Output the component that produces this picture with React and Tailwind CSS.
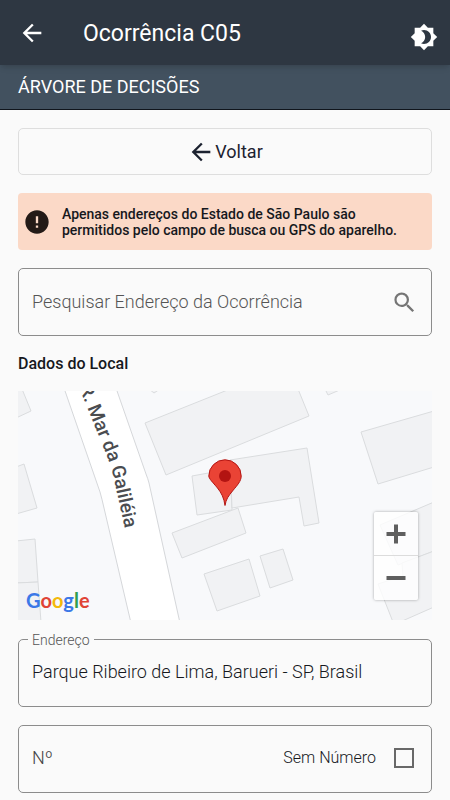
import { useState } from 'react';
import { MdArrowBack, MdBrightness4, MdError, MdSearch } from 'react-icons/md';

const buildings = [
  '-2,-2 4,-2 13,20 -2,27',
  '-2,76 6,73 19,117 -2,123',
  '-2,150 17,148 20,191 -2,192',
  '-2,192 20,191 23,231 -2,231',
  '131,-2 136,2 142,-2',
  '307,-2 310,4 324,-2',
  '127,32 212,-2 280,-2 291,25 148,84',
  '174,85 212,78 214,119 179,124',
  '212,69 289,57 301,132 286,135 281,106 214,117',
  '154,142 220,117 228,142 164,167',
  '186,183 231,168 242,205 199,220',
  '242,165 265,158 275,189 252,197',
  '343,41 416,20 416,76 360,93',
  '362,134 416,111 416,160 380,174',
  '360,193 385,185 384,172 416,160 416,216 382,231 375,231',
];

function Header() {
  return (
    <header className="relative z-10 flex h-[65px] items-center bg-[#2e3742] px-[18px] text-white shadow-md">
      <button type="button" aria-label="Voltar" className="text-[28px]">
        <MdArrowBack />
      </button>
      <h1 className="ml-[37px] flex-1 pt-0.5 text-[23px] leading-8">Ocorrência C05</h1>
      <button type="button" aria-label="Alternar tema" className="-mr-1.5 mt-2 text-[28px]">
        <MdBrightness4 />
      </button>
    </header>
  );
}

function MapView() {
  return (
    <div className="relative mt-[15px] h-[229px] overflow-hidden bg-[#f8f9fb]">
      <svg viewBox="0 0 414 229" preserveAspectRatio="xMidYMid slice" className="h-full w-full">
        <g fill="#f1f2f4" stroke="#dadcde" strokeWidth="1">
          {buildings.map((points) => (
            <polygon key={points} points={points} />
          ))}
        </g>
        <path
          d="M46 -3 L82 101 Q84 108 86 117 L113 232 H162 L131 92 Q130 88 128 83 L98 -3Z"
          fill="#fff"
          stroke="#d5d7da"
        />
        <path id="street" d="M57 -14 L84 53 Q94 76 98 97 L115 175" fill="none" />
        <text className="font-medium" fontSize="19" fill="#4a4c50">
          <textPath href="#street" startOffset="11">R. Mar da Galiléia</textPath>
        </text>
        <path
          d="M207 114.500 C206 107 203.500 102 199.500 97 C194.500 91 190.800 87.500 190.800 85 A16.200 16.200 0 1 1 223.200 85 C223.200 90 219.500 94 214.500 100 C210.500 105 208 108 207 114.500Z"
          fill="#ea4335"
          stroke="#b31412"
        />
        <circle cx="207" cy="85" r="6" fill="#b31412" />
      </svg>
      <a
        href="#mapa"
        aria-label="Google"
        className="absolute bottom-1.5 left-2 font-['Lato'] text-[20px] leading-7 font-bold"
      >
        <span className="text-[#3b78e7]">G</span>
        <span className="text-[#e04436]">o</span>
        <span className="text-[#f3b90c]">o</span>
        <span className="text-[#3b78e7]">g</span>
        <span className="text-[#2f9e50]">l</span>
        <span className="text-[#e04436]">e</span>
      </a>
      <div className="absolute right-[14px] bottom-5 flex w-11 flex-col rounded-xs bg-white/80 shadow-[0_0_3px_rgba(0,0,0,0.35)]">
        <button type="button" aria-label="Aumentar zoom" className="flex h-11 items-center justify-center border-b border-[#dcdcdc]">
          <svg viewBox="0 0 20 20" className="size-5" stroke="#5f5f5f" strokeWidth="4">
            <path d="M0.500 10h19M10 0.500v19" />
          </svg>
        </button>
        <button type="button" aria-label="Diminuir zoom" className="flex h-11 items-center justify-center">
          <svg viewBox="0 0 20 20" className="size-5" stroke="#5f5f5f" strokeWidth="4">
            <path d="M0.500 10h19" />
          </svg>
        </button>
      </div>
    </div>
  );
}

function App() {
  const [address, setAddress] = useState('Parque Ribeiro de Lima, Barueri - SP, Brasil');
  const [noNumber, setNoNumber] = useState(false);

  return (
    <div className="min-h-screen bg-[#fafafa] pb-2 font-['Roboto',sans-serif] text-[#16181d]">
      <Header />
      <h2 className="h-[45px] border-b border-[#10151c] bg-[#42515f] px-[18px] text-lg leading-[43px] text-white">
        ÁRVORE DE DECISÕES
      </h2>

      <main className="px-[18px] pt-[18px]">
        <button
          type="button"
          className="flex h-[47px] w-full items-center justify-center rounded-[5px] border border-[#dedede] text-lg text-[#1c2230]"
        >
          <MdArrowBack className="size-7" />
          <span>Voltar</span>
        </button>

        <div role="alert" className="mt-[18px] flex h-[57px] items-center rounded-[4px] bg-[#fbd9c7] pl-[5px]">
          <MdError className="size-7 shrink-0 text-[#231a17]" />
          <p className="ml-[11px] text-sm leading-4 font-medium">
            Apenas endereços do Estado de São Paulo são
            <br />
            permitidos pelo campo de busca ou GPS do aparelho.
          </p>
        </div>

        <div className="mt-[18px] flex h-[68px] items-center rounded-[5px] border border-[#8c8c8c] pr-[13px] pl-[13px]">
          <input
            type="search"
            aria-label="Pesquisar Endereço da Ocorrência"
            placeholder="Pesquisar Endereço da Ocorrência"
            className="min-w-0 flex-1 text-lg font-light outline-none placeholder:text-[#555]"
          />
          <button type="button" aria-label="Pesquisar" className="text-[27px] text-[#757575]">
            <MdSearch />
          </button>
        </div>

        <h3 className="mt-4 text-base leading-6 font-medium">Dados do Local</h3>
        <MapView />

        <div className="relative mt-[19px] h-[68px] rounded-[5px] border border-[#8c8c8c]">
          <label htmlFor="endereco" className="absolute -top-2 left-[9px] bg-[#fafafa] px-1 text-sm leading-4 font-light text-[#555]">
            Endereço
          </label>
          <input
            id="endereco"
            value={address}
            onChange={(e) => setAddress(e.target.value)}
            className="h-full w-full px-[13px] pb-1 text-lg font-light outline-none"
          />
        </div>

        <div className="mt-[18px] flex h-[68px] items-center rounded-[5px] border border-[#8c8c8c] pr-[17px] pb-0.5 pl-[13px]">
          <input
            aria-label="Nº"
            placeholder="Nº"
            disabled={noNumber}
            className="min-w-0 flex-1 text-lg font-light outline-none placeholder:text-[#444]"
          />
          <label htmlFor="sem-numero" className="text-base font-light">
            Sem Número
          </label>
          <input
            id="sem-numero"
            type="checkbox"
            checked={noNumber}
            onChange={(e) => setNoNumber(e.target.checked)}
            className="ml-[18px] size-5 appearance-none border-2 border-[#686868] checked:bg-[#42515f]"
          />
        </div>
      </main>
    </div>
  );
}

export default App;
